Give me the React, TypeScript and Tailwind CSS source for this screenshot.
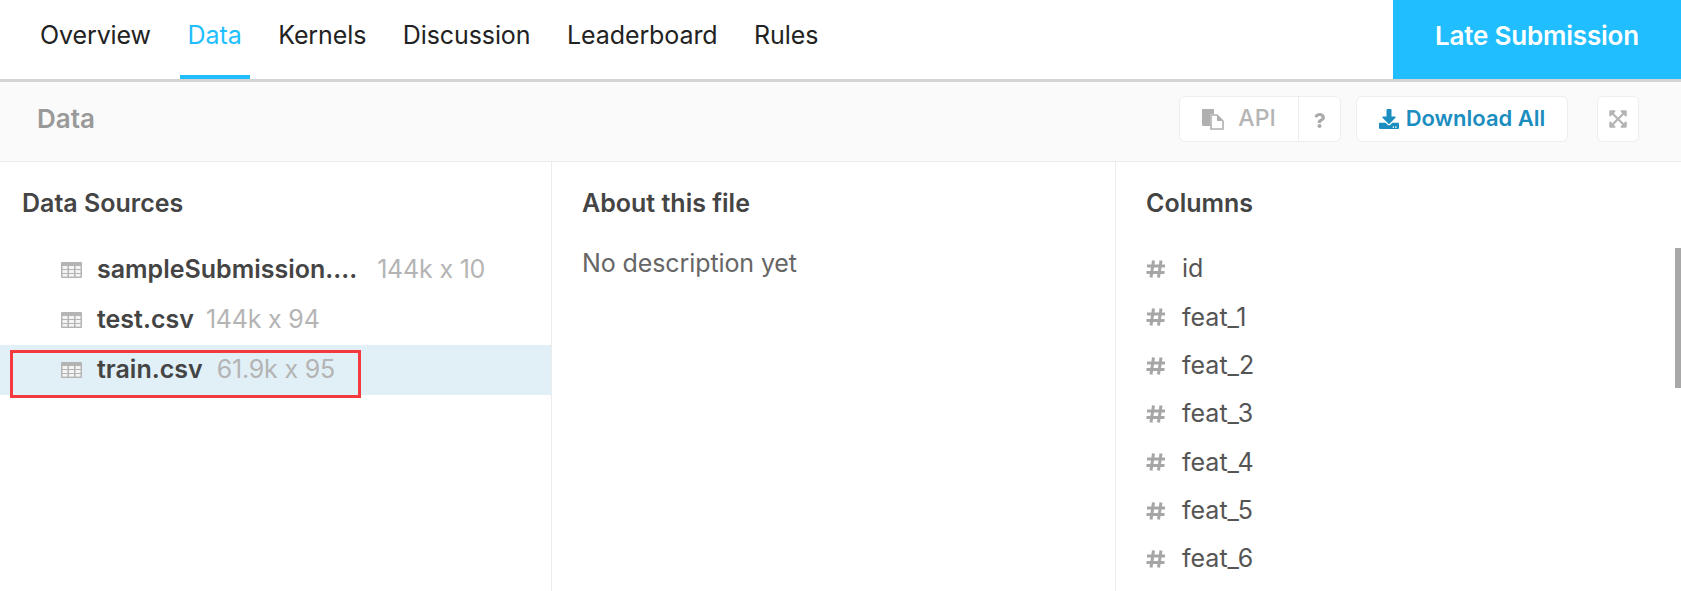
import { FaDownload, FaExpandArrowsAlt, FaQuestion } from 'react-icons/fa';

const tabs = ['Overview', 'Data', 'Kernels', 'Discussion', 'Leaderboard', 'Rules'];
const columns = ['id', 'feat_1', 'feat_2', 'feat_3', 'feat_4', 'feat_5', 'feat_6'];
const sources = [
  { name: 'sampleSubmission....', meta: '144k x 10', gap: 'gap-[20px]' },
  { name: 'test.csv', meta: '144k x 94', gap: 'gap-[12px]' },
  { name: 'train.csv', meta: '61.9k x 95', gap: 'gap-[14px]' },
];

function TableIcon() {
  return (
    <svg width="21" height="16" viewBox="0 0 21 16" className="shrink-0">
      <rect x="0" y="0" width="21" height="16" rx="1" fill="#b4b4b4" />
      <g fill="#f4f4f4">
        <rect x="1.5" y="4" width="5" height="3" />
        <rect x="8" y="4" width="5" height="3" />
        <rect x="14.5" y="4" width="5" height="3" />
        <rect x="1.5" y="8" width="5" height="3" />
        <rect x="8" y="8" width="5" height="3" />
        <rect x="14.5" y="8" width="5" height="3" />
        <rect x="1.5" y="12" width="5" height="2.6" />
        <rect x="8" y="12" width="5" height="2.6" />
        <rect x="14.5" y="12" width="5" height="2.6" />
      </g>
    </svg>
  );
}

function ApiIcon() {
  return (
    <svg width="22" height="22" viewBox="0 0 22 22" className="shrink-0">
      <path d="M0 2a1 1 0 0 1 1-1h10a1 1 0 0 1 1 1v4H8v12H1a1 1 0 0 1-1-1z" fill="#b0b0b0" />
      <path d="M9 7h6l6 6v8H9z" fill="#ffffff" stroke="#b0b0b0" strokeWidth="1.6" />
      <path d="M15 7v6h6z" fill="#b0b0b0" />
    </svg>
  );
}

function HashIcon() {
  return (
    <svg width="20" height="20" viewBox="0 0 20 20" className="shrink-0" stroke="#a6a6a6" strokeWidth="3" fill="none">
      <path d="M7.5 1.5 5 18.5" />
      <path d="M15 1.5 12.5 18.5" />
      <path d="M1 7h18" />
      <path d="M0.5 13.5h18" />
    </svg>
  );
}

export default function App() {
  return (
    <div className="flex h-[591px] w-[1681px] flex-col overflow-hidden bg-white font-['Inter','Roboto',sans-serif] text-[#444]">
      {/* Tabs */}
      <div className="flex h-[82px] shrink-0 items-stretch justify-between border-b-[3px] border-[#d4d4d4]">
        <div className="flex pl-[32px]">
          {tabs.map((tab) => (
            <div
              key={tab}
              className={`mr-[20.6px] flex h-[79px] items-center border-b-[4px] px-[8px] pb-[3px] text-[25px] tracking-[-0.1px] ${
                tab === 'Data' ? 'border-[#20beff] text-[#20beff]' : 'border-transparent text-[#222]'
              }`}
            >
              {tab}
            </div>
          ))}
        </div>
        <div className="flex h-[79px] w-[288px] items-center justify-center bg-[#20beff] pb-[9px] text-[26px] font-semibold tracking-[-0.2px] text-white">
          Late Submission
        </div>
      </div>

      {/* Toolbar */}
      <div className="flex h-[80px] shrink-0 items-center justify-between border-b border-[#ececec] bg-[#fafafa] pr-[42px] pb-[6px] pl-[37px]">
        <span className="text-[26px] font-semibold text-[#999]">Data</span>
        <div className="flex items-center">
          <div className="flex h-[46px] w-[162px] rounded-[6px] border border-[#eee] bg-white">
            <div className="flex w-[119px] items-center justify-center gap-[14px] border-r border-[#eee] text-[23px] font-medium text-[#b4b4b4]">
              <ApiIcon />
              API
            </div>
            <div className="flex flex-1 items-center justify-center pt-[3px] text-[#aaa]">
              <FaQuestion size={15} />
            </div>
          </div>
          <div className="ml-[15px] flex h-[46px] w-[212px] items-center justify-center gap-[7px] rounded-[6px] border border-[#eee] bg-white text-[22px] font-semibold text-[#1b8dbf]">
            <FaDownload size={20} />
            Download All
          </div>
          <div className="ml-[29px] flex h-[46px] w-[42px] items-center justify-center rounded-[6px] border border-[#eee] bg-white text-[#b4b4b4]">
            <FaExpandArrowsAlt size={20} />
          </div>
        </div>
      </div>

      {/* Panels */}
      <div className="flex min-h-0 flex-1">
        <div className="w-[552px] shrink-0 border-r border-[#ececec] pt-[26px]">
          <h3 className="pl-[22px] text-[25px] leading-[30px] font-semibold text-[#444]">Data Sources</h3>
          <div className="relative mt-[27px]">
            {sources.map((s) => (
              <div
                key={s.name}
                className={`flex h-[50px] items-center pl-[61px] ${s.name === 'train.csv' ? 'bg-[#e1eff6]' : ''}`}
              >
                <TableIcon />
                <div className={`ml-[15px] flex items-baseline ${s.gap}`}>
                  <span className="text-[25px] font-semibold text-[#444]">{s.name}</span>
                  <span className="text-[25px] tracking-[-0.2px] text-[#b4b4b4]">{s.meta}</span>
                </div>
              </div>
            ))}
            {/* annotation box */}
            <div className="absolute top-[105px] left-[10px] h-[48px] w-[351px] border-[3px] border-[#f43a3f]" />
          </div>
        </div>

        <div className="w-[564px] shrink-0 border-r border-[#ececec] pt-[26px] pl-[30px]">
          <h3 className="text-[25px] leading-[30px] font-semibold text-[#444]">About this file</h3>
          <p className="mt-[29px] text-[25px] leading-[32px] tracking-[-0.1px] text-[#666]">No description yet</p>
        </div>

        <div className="relative flex-1 pt-[26px] pl-[30px]">
          <h3 className="text-[25px] leading-[30px] font-semibold text-[#444]">Columns</h3>
          <div className="mt-[27px]">
            {columns.map((c) => (
              <div key={c} className="flex h-[48.3px] items-center">
                <HashIcon />
                <span className="ml-[16px] text-[25px] text-[#555]">{c}</span>
              </div>
            ))}
          </div>
          {/* scroll thumb */}
          <div className="absolute top-[86px] right-0 h-[140px] w-[6px] bg-[#a8a8a8]" />
        </div>
      </div>
    </div>
  );
}
